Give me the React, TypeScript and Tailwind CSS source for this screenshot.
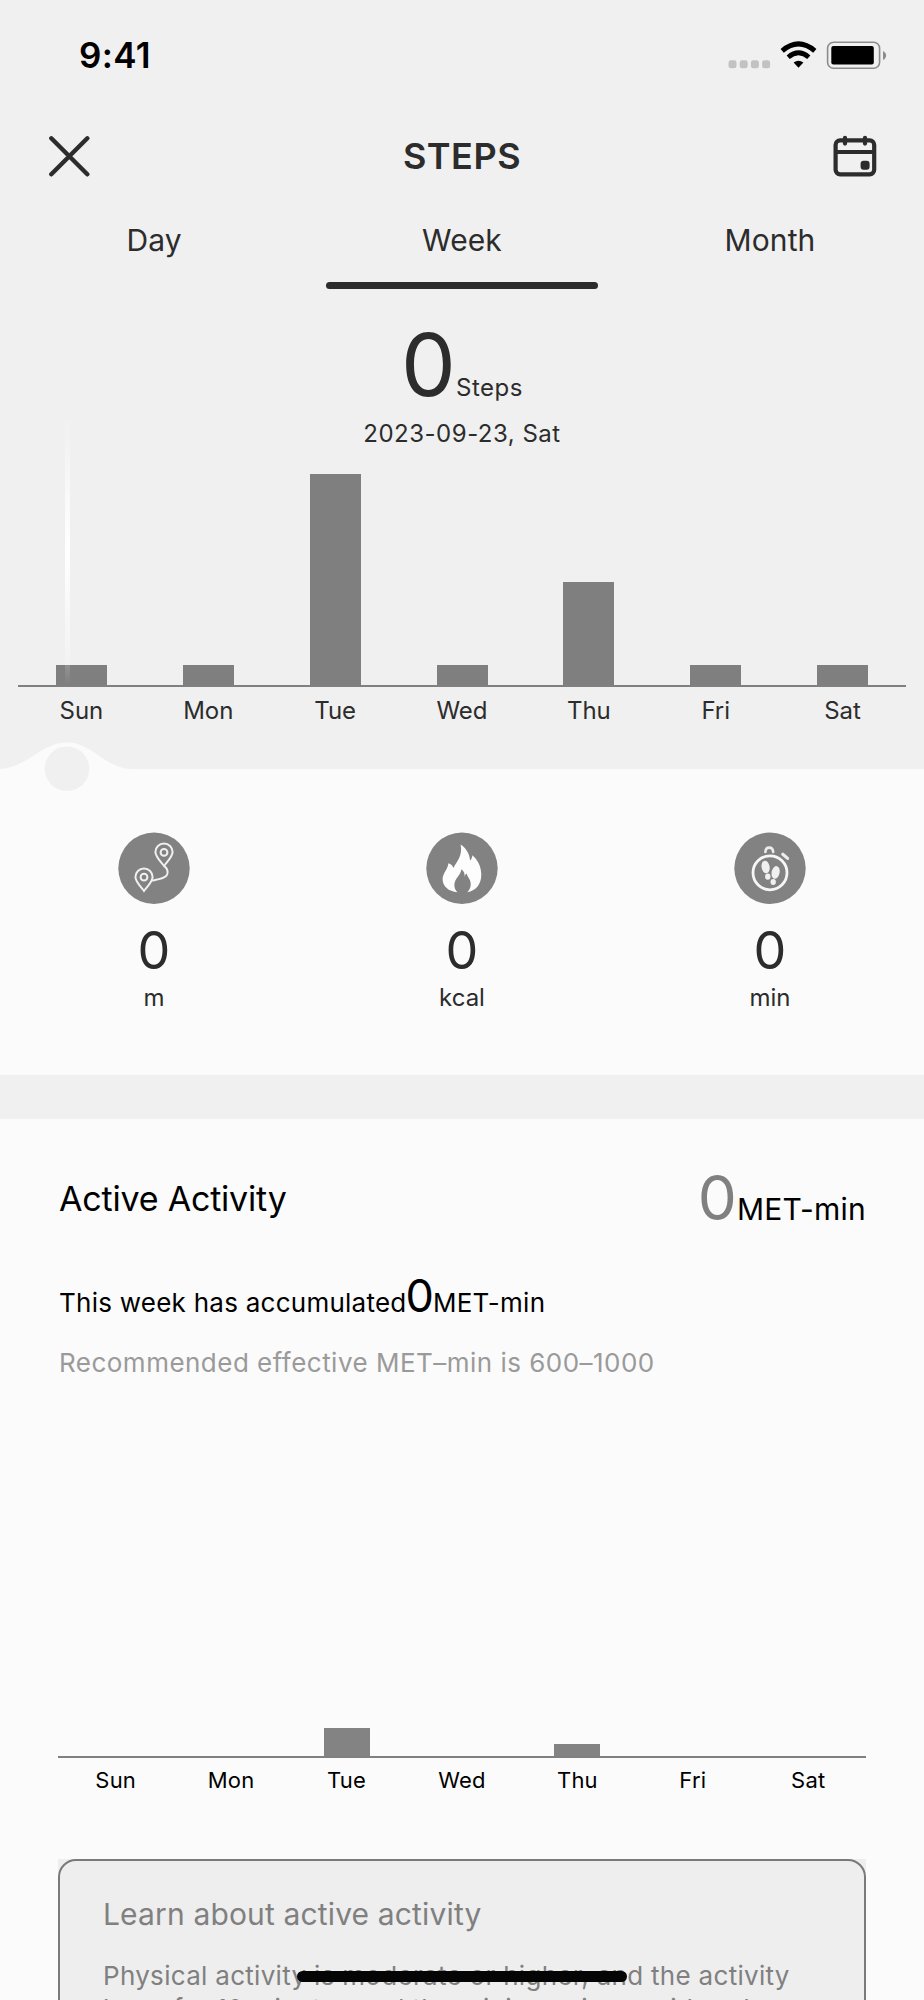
import { useState } from "react";

const tabs = ["Day", "Week", "Month"];

const weekSteps = [
  { day: "Sun", height: 20 },
  { day: "Mon", height: 20 },
  { day: "Tue", height: 211 },
  { day: "Wed", height: 20 },
  { day: "Thu", height: 103 },
  { day: "Fri", height: 20 },
  { day: "Sat", height: 20 },
];

const weekActivity = [
  { day: "Sun", height: 0 },
  { day: "Mon", height: 0 },
  { day: "Tue", height: 28 },
  { day: "Wed", height: 0 },
  { day: "Thu", height: 12 },
  { day: "Fri", height: 0 },
  { day: "Sat", height: 0 },
];

function StatusIcons() {
  return (
    <svg width="160" height="30" viewBox="0 0 160 30" fill="none">
      <g fill="#c2c2c2">
        <rect x="0.5" y="20.3" width="8" height="8" rx="2.4" />
        <rect x="11.7" y="20.3" width="8" height="8" rx="2.4" />
        <rect x="22.9" y="20.3" width="8" height="8" rx="2.4" />
        <rect x="34.1" y="20.3" width="8" height="8" rx="2.4" />
      </g>
      <g stroke="#000">
        <path d="M54.2 10.8 Q70.5 -3 86.8 10.8" strokeWidth="5" />
        <path d="M60.2 17.2 Q70.5 8.4 80.8 17.2" strokeWidth="4.8" />
      </g>
      <path d="M65.6 22.6 Q70.5 18.9 75.4 22.6 L70.5 27.7 Z" fill="#000" />
      <rect x="99.6" y="2.3" width="52" height="26" rx="6" stroke="#8c8c8c" strokeWidth="1.6" />
      <rect x="103.3" y="6" width="42.5" height="18.6" rx="2" fill="#000" />
      <path d="M155 11 C159.2 13 159.2 18.1 155 20.1 Z" fill="#8c8c8c" />
    </svg>
  );
}

function CloseIcon() {
  return (
    <svg width="42" height="42" viewBox="0 0 42 42" fill="none" stroke="#2c2c2c" strokeWidth="4.4" strokeLinecap="round">
      <path d="M3.3 3.3 L39.3 39.3 M39.3 3.3 L3.3 39.3" />
    </svg>
  );
}

function CalendarIcon() {
  return (
    <svg width="44" height="42" viewBox="0 0 44 42" fill="none" stroke="#2c2c2c" strokeWidth="4.2" strokeLinecap="round">
      <rect x="2.6" y="5.3" width="38.6" height="34" rx="4.5" />
      <path d="M3 17 H41" strokeLinecap="butt" strokeWidth="3.8" />
      <path d="M12 2.8 V8.6 M32 2.8 V8.6" />
      <rect x="27.6" y="25.8" width="9" height="9" rx="3" fill="#2c2c2c" stroke="none" />
    </svg>
  );
}

function RouteIcon() {
  return (
    <svg width="72" height="72" viewBox="0 0 72 72" fill="none" stroke="#f0f0f0" strokeWidth="2">
      <circle cx="36" cy="36.3" r="35.7" fill="#828282" stroke="none" />
      <path d="M46 34 C42.5 29.5 37.4 24.5 37.4 20 A8.6 8.6 0 0 1 54.6 20 C54.6 24.5 49.5 29.5 46 34 Z" />
      <circle cx="46" cy="20.4" r="3.4" />
      <path d="M26 59 C22.5 54.5 17.4 49.5 17.4 45 A8.6 8.6 0 0 1 34.6 45 C34.6 49.5 29.5 54.5 26 59 Z" />
      <circle cx="26" cy="45.2" r="3.4" />
      <path d="M46.5 34 C49 36.5 50.4 39.5 49.2 42.5 C48 46 42 46.8 34 48.6" />
    </svg>
  );
}

function FlameIcon() {
  return (
    <svg width="72" height="72" viewBox="0 0 72 72">
      <circle cx="36" cy="36.3" r="35.7" fill="#828282" />
      <path
        fill="#fdfdfd"
        d="M34.6 12.5 C39.5 15.8 43.6 21 44.1 28.5 C45.6 27 46.2 25.3 46.4 23.2 C51.5 27.6 55.4 34.5 55.3 43 C55.2 52.5 49.5 58.8 41.4 60.2 C44 57.5 45.2 54.5 44.6 50.5 C44 46.8 41.6 45.2 40.6 41.5 C39.4 42.2 38.8 43.6 38.6 45 C38.9 41.6 38 38.8 35.4 37.2 C34.8 42.2 31.2 44.6 29.2 49 C27.6 53 28.4 57.5 31.4 60.2 C22.5 59.4 16.6 54.5 16.6 47 C16.7 41 21.8 37.6 22.4 31.2 C25 32 26.7 33.7 27.5 36 C30.5 29.5 37 24 34.6 12.5 Z"
      />
    </svg>
  );
}

function TimerIcon() {
  return (
    <svg width="72" height="72" viewBox="0 0 72 72" fill="none">
      <circle cx="36" cy="36.3" r="35.7" fill="#828282" />
      <circle cx="36" cy="40.8" r="17" stroke="#f6f6f6" strokeWidth="2.8" />
      <path d="M31.4 20 C31.6 14.2 38.8 14.2 39.2 20" stroke="#ececec" strokeWidth="2.6" strokeLinecap="round" />
      <path d="M48.8 22.2 L53.6 26.4" stroke="#ececec" strokeWidth="3.2" strokeLinecap="round" />
      <g fill="#f0f0f0">
        <ellipse cx="31.6" cy="35" rx="4" ry="6.4" transform="rotate(-10 31.6 35)" />
        <ellipse cx="33.8" cy="44.6" rx="2.7" ry="3.2" />
        <ellipse cx="41.6" cy="40.4" rx="4" ry="6.4" transform="rotate(12 41.6 40.4)" />
        <ellipse cx="39.2" cy="50" rx="2.7" ry="3" />
      </g>
    </svg>
  );
}

const stats = [
  { icon: <RouteIcon />, value: 0, unit: "m" },
  { icon: <FlameIcon />, value: 0, unit: "kcal" },
  { icon: <TimerIcon />, value: 0, unit: "min" },
];

export default function App() {
  const [activeTab, setActiveTab] = useState("Week");

  return (
    <div className="relative w-[924px] h-[2000px] overflow-hidden bg-[#fbfbfb] font-['Inter',sans-serif] text-[#2c2c2c]">
      <div className="relative h-[769px] bg-[#f0f0f0]">
        <div className="flex h-[110px] items-center justify-between pl-[79px] pr-[36px]">
          <span className="text-[35px] leading-none font-semibold tracking-[0.3px] text-black">9:41</span>
          <StatusIcons />
        </div>

        <header className="flex h-[92px] items-center justify-between pl-12 pr-[47px]">
          <button aria-label="Close">
            <CloseIcon />
          </button>
          <h1 className="pl-px text-[36px] leading-none font-semibold tracking-[0.5px]">STEPS</h1>
          <button aria-label="Calendar">
            <CalendarIcon />
          </button>
        </header>

        <nav className="grid h-[87px] grid-cols-3">
          {tabs.map((tab) => (
            <button key={tab} onClick={() => setActiveTab(tab)} className="flex flex-col items-center justify-between">
              <span className="flex h-[76px] items-center text-[30px] leading-none tracking-[0.1px]">{tab}</span>
              {activeTab === tab && <span className="h-[7px] w-[272px] rounded-full bg-[#2c2c2c]" />}
            </button>
          ))}
        </nav>

        <div className="flex items-baseline justify-center pt-[33px]">
          <span className="text-[87px] leading-[86px]">0</span>
          <span className="text-2xl leading-none tracking-[0.5px]">Steps</span>
        </div>
        <p className="mt-[14px] text-center text-2xl leading-none tracking-[0.5px]">2023-09-23, Sat</p>

        <div className="mx-[18px] mt-[28px] flex h-[213px] items-end border-b-2 border-[#808080]">
          {weekSteps.map(({ day, height }) => (
            <div key={day} className="flex flex-1 justify-center">
              <div className="w-[51px] bg-[#7f7f7f]" style={{ height }} />
            </div>
          ))}
        </div>
        <div className="mx-[18px] flex pt-[12px]">
          {weekSteps.map(({ day }) => (
            <span key={day} className="flex-1 text-center text-2xl leading-none">
              {day}
            </span>
          ))}
        </div>

        {/* day cursor: glow line, bump and knob */}
        <div className="absolute top-[415px] left-[65px] h-[270px] w-[5px] bg-linear-to-b from-white/0 via-white to-white/0" />
        <svg className="absolute top-[741px] left-0" width="134" height="52" viewBox="0 0 134 52">
          <path d="M0 28 C28 26 42 1.5 67 1.5 C92 1.5 106 28 132 28 V52 H0 Z" fill="#fbfbfb" />
          <circle cx="67" cy="27.7" r="22.3" fill="#f0f0f0" />
        </svg>
      </div>

      <section className="grid h-[306px] grid-cols-3 pt-[63px]">
        {stats.map(({ icon, value, unit }) => (
          <div key={unit} className="flex flex-col items-center">
            {icon}
            <span className="mt-[21px] text-[52px] leading-none">{value}</span>
            <span className="mt-[9px] text-2xl leading-none">{unit}</span>
          </div>
        ))}
      </section>

      <div className="h-11 bg-[#f0f0f0]" />

      <section className="px-[58px] text-black">
        <div className="flex h-[134px] items-baseline justify-between pt-[48px] pl-px">
          <h2 className="relative -top-[9px] text-[34px] leading-none tracking-[-0.2px]">Active Activity</h2>
          <div className="flex items-baseline">
            <span className="text-[62px] leading-[61px] text-[#808080]">0</span>
            <span className="text-[30px] leading-none tracking-[0.25px]">MET-min</span>
          </div>
        </div>
        <div className="flex items-baseline pt-[21px] pl-px leading-none">
          <span className="text-[26px] leading-none tracking-[0.25px]">This week has accumulated</span>
          <span className="text-[45px] leading-[44px] -mx-px">0</span>
          <span className="text-[26px] leading-none tracking-[0.3px]">MET-min</span>
        </div>
        <p className="mt-[32px] pl-px text-[26px] leading-none tracking-[0.48px] text-[#9a9a9a]">
          Recommended effective MET–min is 600–1000
        </p>

        <div className="mt-[305px] flex h-[77px] items-end border-b-2 border-[#808080]">
          {weekActivity.map(({ day, height }) => (
            <div key={day} className="flex flex-1 justify-center">
              <div className="w-[46px] bg-[#838383]" style={{ height }} />
            </div>
          ))}
        </div>
        <div className="flex pt-[11px]">
          {weekActivity.map(({ day }) => (
            <span key={day} className="flex-1 text-center text-[22px] leading-none tracking-[0.2px]">
              {day}
            </span>
          ))}
        </div>

        <div className="mt-[68px] bg-[#eee]">
          <div className="h-[180px] rounded-[18px] border-2 border-[#7a7a7a] px-[43px] pt-[38px] text-[#808080]">
            <h3 className="text-[30px] leading-none tracking-[0.15px]">Learn about active activity</h3>
            <p className="mt-[30px] text-[26px] leading-[33px] tracking-[0.3px] whitespace-nowrap">
              Physical activity is moderate or higher, and the activity
              <br />
              been for 10 minutes and the minimum is considered
            </p>
          </div>
        </div>
      </section>

      <div className="absolute bottom-[18px] left-[297px] h-[11px] w-[330px] rounded-full bg-[#050505]" />
    </div>
  );
}
